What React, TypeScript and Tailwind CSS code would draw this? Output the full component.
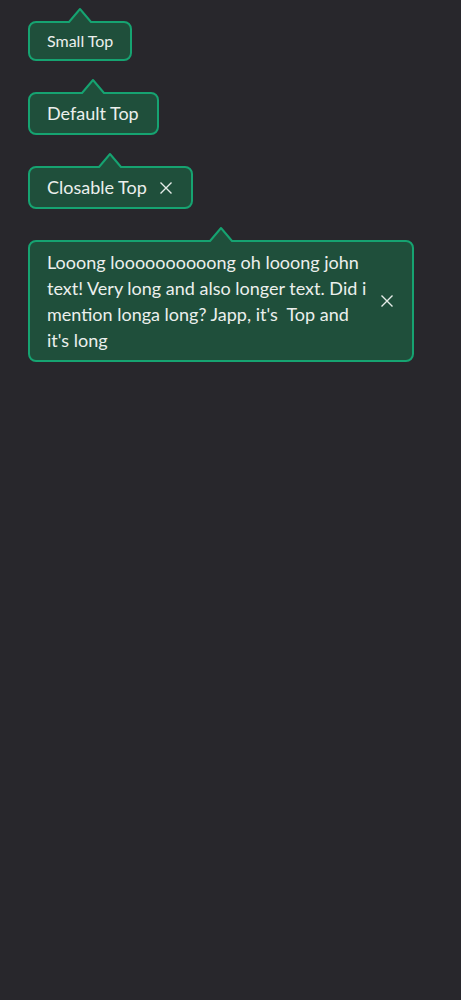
import { ReactNode } from "react";

const Arrow = () => (
  <svg
    className="absolute left-1/2 -translate-x-1/2 top-[-16px]"
    width="32"
    height="18"
    viewBox="0 0 32 18"
  >
    <path d="M0 15 H5 L16 2 L27 15 H32 V18 H0 Z" fill="#1f4f3b" />
    <path
      d="M0 15 H5 L16 2 L27 15 H32"
      fill="none"
      stroke="#16a371"
      strokeWidth="2"
      strokeLinejoin="round"
    />
  </svg>
);

const CloseIcon = () => (
  <svg width="14" height="14" viewBox="0 0 14 14" className="shrink-0">
    <path d="M1.5 1.5 L12.5 12.5 M12.5 1.5 L1.5 12.5" stroke="#e6ece8" strokeWidth="1.4" />
  </svg>
);

const Tooltip = ({
  children,
  small,
  closable,
  className = "",
}: {
  children: ReactNode;
  small?: boolean;
  closable?: boolean;
  className?: string;
}) => (
  <div
    className={`relative flex items-center gap-3 rounded-lg border-2 border-[#16a371] bg-[#1f4f3b] text-[#ecefed] ${
      small
        ? "px-[17px] py-[8px] text-[16px] leading-[20px]"
        : "pl-[17px] pr-[18px] py-[7px] text-[18px] leading-[25px]"
    } ${className}`}
  >
    <Arrow />
    <div>{children}</div>
    {closable && (
      <button aria-label="Close" className="flex items-center">
        <CloseIcon />
      </button>
    )}
  </div>
);

export default function App() {
  return (
    <div
      className="min-h-[1000px] w-full bg-[#28272c] pl-[28px] pt-[21px] flex flex-col items-start gap-[31px]"
      style={{ fontFamily: "Lato, 'Noto Sans', sans-serif" }}
    >
      <Tooltip small>Small Top</Tooltip>
      <Tooltip>Default Top</Tooltip>
      <Tooltip closable>Closable Top</Tooltip>
      <Tooltip closable className="w-[386px] !leading-[26px]">
        Looong loooooooooong oh looong john text! Very long and also longer text. Did i mention
        longa long? Japp, it's&nbsp; Top and it's long
      </Tooltip>
    </div>
  );
}
